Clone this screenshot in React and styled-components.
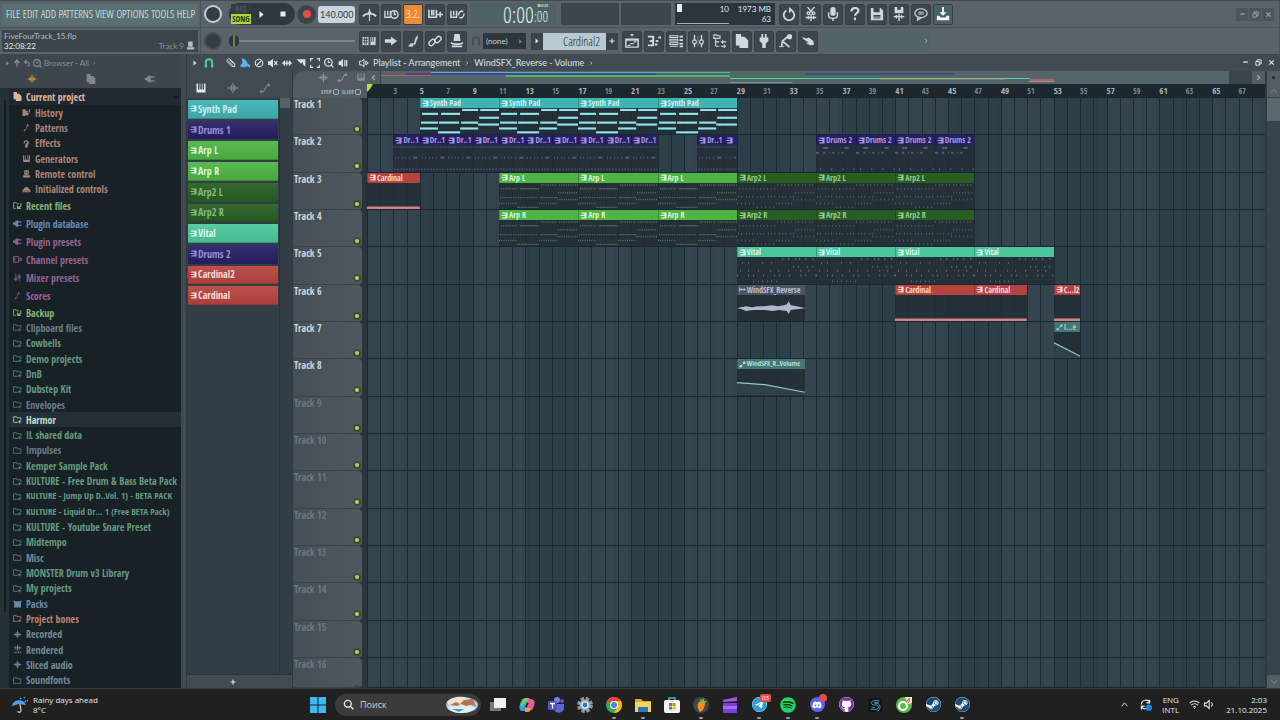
import React, { Component } from 'react';
import styled, { createGlobalStyle, css } from 'styled-components';
import { FaDiscord, FaGithub, FaSpotify, FaSteam, FaTelegram } from 'react-icons/fa6';

const BARS = 68;
const BEATS = 5;

const Fonts = {
    Light: '"Open Sans Condensed Light", "Open Sans Condensed", Lato, sans-serif',
    Narrow: '"Open Sans Condensed", Lato, sans-serif',
    Text: 'Lato, "Open Sans", sans-serif',
    System: '"Open Sans", "Noto Sans", sans-serif'
}

const Colors = {
    Toolbar: '#5a636a',
    Button: '#3d464c',
    Teal: '#3fb2b4',
    Purple: '#291f66',
    Green: '#4eb444',
    DarkGreen: '#285e22',
    Mint: '#4cc79c',
    Red: '#b64340',
    Slate: '#4b5463',
    Pine: '#447673'
}

/* ---------- icons ---------- */

const glyphs = {
    wave: <path d="M1 8h14M4 6v4M6 4v8M8 1v14M10 4v8M12 6v4" stroke="currentColor" strokeWidth="1.4" fill="none"/>,
    files: <path d="M1 0h6v3h4l4 4v9H5v-3H1z" fill="currentColor"/>,
    plug: <path d="M0 6h3c1-2 3-4 6-4v2h6v2H9v4h6v2H9v2c-3 0-5-2-6-4H0z" fill="currentColor"/>,
    note: <path d="M9 1c1 3 4 2 4 5-1-1-2-1-3-1l-3 7c-1 3-5 3-4 1 1-2 3-2 4-2z" fill="currentColor"/>,
    history: <path d="M1 2h5v3h4v4h3l-4 5-4-5h2V7l-1 7H1zM12 2h2v6h-2z" fill="currentColor"/>,
    effects: <path d="M5 15h5v-4l2-2V5L9 2H6L3 5v3h2V6l2-2 2 1v2L6 9v2z" fill="currentColor"/>,
    keys: <path d="M2 2h2v8h2V2h4v8h2V2h2v12H2zM7 2h2v8H7z" fill="currentColor" fillRule="evenodd"/>,
    remote: <path d="M4 2h8v8H4zM2 11h12v4H2zM6 4v4h1V4zM9 4v4h1V4z" fill="currentColor" fillRule="evenodd"/>,
    init: <path d="M4 6c1-3 7-3 8 0l3 3v4H1V9zM3 10v1h10v-1z" fill="currentColor" fillRule="evenodd"/>,
    folder: <path d="M1 3h6l1 2h6v8H1z" fill="none" stroke="currentColor" strokeWidth="1.3"/>,
    folderPlus: <path d="M9 13H1V3h5l1 2h7v4M12 9v6M9 12h6" fill="none" stroke="currentColor" strokeWidth="1.3"/>,
    recent: <g fill="none" stroke="currentColor" strokeWidth="1.5"><path d="M5 13H1V3h5l1 2h4"/><path d="M14 4v5l-6 4M8 8v5h6" strokeWidth="2"/></g>,
    channel: <path d="M1 3h9v10H1zM12 6h3v4h-3zM3 5v6" fill="none" stroke="currentColor" strokeWidth="1.5"/>,
    mixer: <path d="M5 1v14M11 1v14M3 9h4v3H3zM9 5h4v3H9z" fill="none" stroke="currentColor" strokeWidth="1.3"/>,
    box: <path d="M0 2l4 2h8l4-2-2 5v8H2V7z" fill="currentColor"/>,
    rendered: <path d="M1 5h14M5 2v6M8 0v10M11 2v6M2 13h6M10 11v4M13 11v4" fill="none" stroke="currentColor" strokeWidth="1.5"/>,
    pattern: <path d="M3 1h12v14H3v-3h7v-3H1V7h9V4H3z" fill="currentColor"/>,
    audio: <path d="M1 3v10M2 8h13M5 5v6M11 5l3 3-3 3" fill="none" stroke="currentColor" strokeWidth="2"/>,
    curve: <g><path d="M3 13h3l5-9h3" fill="none" stroke="currentColor" strokeWidth="1.5"/><circle cx="3" cy="12.500" r="2" fill="currentColor"/><circle cx="13" cy="4" r="2" fill="currentColor"/></g>,
    auto: <g><path d="M4 12L12 4" stroke="currentColor" strokeWidth="2"/><circle cx="4" cy="12" r="3" fill="currentColor"/><circle cx="12" cy="4" r="3" fill="currentColor"/></g>,
    right: <path d="M5 3l6 5-6 5z" fill="currentColor"/>,
    down: <path d="M3 5h10l-5 6z" fill="currentColor"/>,
    chevron: <path d="M6 4l4 4-4 4" fill="none" stroke="currentColor" strokeWidth="2"/>,
    chevronLeft: <path d="M10 4L6 8l4 4" fill="none" stroke="currentColor" strokeWidth="2"/>,
    chevronUp: <path d="M3 11l5-6 5 6" fill="none" stroke="currentColor" strokeWidth="1.6"/>,
    chevronDown: <path d="M3 5l5 6 5-6" fill="none" stroke="currentColor" strokeWidth="1.6"/>,
    up: <path d="M8 15V4M3 8l5-6 5 6" fill="none" stroke="currentColor" strokeWidth="2.500"/>,
    undo: <path d="M7 2L3 6l4 4M3 6h6c5 0 5 8 0 8" fill="none" stroke="currentColor" strokeWidth="2.200"/>,
    search: <g fill="none" stroke="currentColor" strokeWidth="2"><circle cx="7" cy="7" r="5"/><path d="M11 11l4 4"/></g>,
    zoom: <g fill="none" stroke="currentColor" strokeWidth="2"><circle cx="7" cy="7" r="6"/><path d="M11 11l4 4M7 4v3h3"/></g>,
    stop: <path d="M3 3h10v10H3z" fill="currentColor"/>,
    magnet: <path d="M3 15V7a5 5 0 0110 0v8M1 13h4M11 13h4" fill="none" stroke="currentColor" strokeWidth="3"/>,
    pencil: <path d="M2 3l3-2 9 8v5l-5-1-8-8zM4 5l7 7M6 3l6 6" fill="none" stroke="currentColor" strokeWidth="1.600"/>,
    brush: <path d="M3 0l6 3 3 5 4 4v3l-5-2-5 2-6-2 4-6z" fill="currentColor"/>,
    ban: <g fill="none" stroke="currentColor" strokeWidth="1.800"><circle cx="8" cy="8" r="6"/><path d="M4 12L12 4"/></g>,
    mute: <g><path d="M0 5h3l5-4v14l-5-4H0z" fill="currentColor"/><path d="M10 5l5 6M15 5l-5 6" stroke="currentColor" strokeWidth="2"/></g>,
    slip: <path d="M0 8l5-5v4h6V3l5 5-5 5V9H5v4zM7 4h2v8H7z" fill="currentColor"/>,
    slice: <path d="M1 2h14v12l-4-4V6L8 9z" fill="currentColor"/>,
    select: <path d="M1 5V1h4M11 1h4v4M15 11v4h-4M5 15H1v-4" fill="none" stroke="currentColor" strokeWidth="1.800"/>,
    playback: <path d="M1 5h3l4-4v14l-4-4H1zM10 3h2v10h-2zM13 3h2v10h-2z" fill="currentColor"/>,
    speaker: <path d="M1 5h3l4-3v12l-4-3H1zM11 5l4 3-4 3z" fill="none" stroke="currentColor" strokeWidth="1.600"/>,
    metronome: <g><path d="M1 10c3-4 11-4 14 0" fill="none" stroke="currentColor" strokeWidth="2"/><path d="M8 2v13" stroke="currentColor" strokeWidth="1.200"/><path d="M5 8l3-5 3 5z" fill="currentColor"/></g>,
    waitInput: <g fill="none" stroke="currentColor" strokeWidth="1.500"><path d="M1 4v7h6M4 4v5M7 4v7"/><circle cx="11" cy="8" r="4"/><path d="M11 5v3h2"/></g>,
    overdub: <path d="M1 3v8h8V3M4 3v6M6 3v6M10 8h6M13 5v6" fill="none" stroke="currentColor" strokeWidth="1.700"/>,
    loopRec: <g fill="none" stroke="currentColor" strokeWidth="1.600"><path d="M1 4v7h6V4M4 4v5"/><path d="M9 9c0-5 4-5 5-4M15 7c0 5-4 5-5 4"/></g>,
    typing: <path d="M0 3h8v10H0zM9 3h7v10H9zM1 6h6M1 9h6M3 4v8M5 4v8M11 3v6M13 3v6" fill="currentColor" stroke="#3d464c" strokeWidth="1"/>,
    arrow: <path d="M1 6h7V3l7 5-7 5v-3H1z" fill="currentColor"/>,
    slide: <path d="M3 14l2-3h3v3zM8 11c3 0 1-5 5-9l0 3c-2 2-1 5-3 7z" fill="currentColor" stroke="currentColor" strokeWidth=".6"/>,
    chain: <g fill="none" stroke="currentColor" strokeWidth="1.600"><rect x="1" y="7" width="8" height="5" rx="2.500" transform="rotate(-45 5 10)"/><rect x="7" y="4" width="8" height="5" rx="2.500" transform="rotate(-45 11 6)"/></g>,
    stamp: <path d="M5 0h6l1 8H4zM1 9c3 2 11 2 14 0v2c-3 2-11 2-14 0zM2 13h12v2H2z" fill="currentColor"/>,
    refresh: <g><path d="M5 4a6 6 0 106 0" fill="none" stroke="currentColor" strokeWidth="2"/><path d="M8 0v7l4-4z" fill="currentColor"/></g>,
    cut: <g fill="none" stroke="currentColor" strokeWidth="1.500"><path d="M4 0l5 6M12 0L7 6M2 12h12M5 10v4M11 10v4M8 8v8"/><circle cx="5" cy="7" r="1.500"/><circle cx="11" cy="7" r="1.500"/></g>,
    mic: <g><rect x="5" y="0" width="6" height="10" rx="3" fill="currentColor"/><path d="M3 6v4c0 4 10 4 10 0V6M8 13v3" fill="none" stroke="currentColor" strokeWidth="1.600"/></g>,
    help: <path d="M4 5c0-5 8-5 8-1 0 3-4 3-4 6M8 12v3" fill="none" stroke="currentColor" strokeWidth="2.400"/>,
    save: <path d="M1 1h11l3 3v11H1zM4 1v5h7V1zM4 9v2h8V9zM4 12v1h8v-1z" fill="currentColor" fillRule="evenodd"/>,
    saveNew: <g><path d="M3 0h10v7H3zM6 0v3h4V0z" fill="currentColor" fillRule="evenodd"/><path d="M2 11h12M5 9v4M8 8v8M11 9v4" stroke="currentColor" strokeWidth="1.600"/></g>,
    chat: <g fill="none" stroke="currentColor" strokeWidth="1.400"><ellipse cx="8" cy="7" rx="7" ry="5"/><path d="M5 11l-1 4 5-3M5 6h6M5 8h6"/></g>,
    download: <path d="M7 0h2v6h3L8 10 4 6h3zM1 10h3l1 2h6l1-2h3v5H1z" fill="currentColor"/>,
    playlist: <g><path d="M1 6h14v9H1zM1 7h14" fill="none" stroke="currentColor" strokeWidth="1.700"/><path d="M3 13h3M6 11h4M10 9h3" stroke="currentColor" strokeWidth="1.500"/><path d="M6 0h4L8 3z" fill="currentColor"/></g>,
    piano: <path d="M1 3h6v10H1M3 8h4M9 12h3M10 8h3M13 4h3" fill="none" stroke="currentColor" strokeWidth="2.200"/>,
    rack: <g fill="none" stroke="currentColor"><path d="M1 2h9v2H1zM1 6h9v2H1zM1 10h9v2H1zM1 14h9" strokeWidth="1.200"/><path d="M12 3h4M12 7h4M12 11h4M12 14h4" strokeWidth="2"/></g>,
    faders: <g fill="none" stroke="currentColor"><path d="M4 1v5M4 11v4M12 1v5M12 11v4" strokeWidth="1.500"/><path d="M2 8l2-2 2 2v2l-2 2-2-2zM10 8l2-2 2 2v2l-2 2-2-2z" strokeWidth="1.300"/><path d="M8 2v12" strokeWidth="1" strokeOpacity=".5"/></g>,
    tree: <path d="M1 5V1h3l1 1h3v3zM3 6v8M3 9h4M3 14h4M9 9h6M9 14h6M11 7v4M13 12v4" fill="none" stroke="currentColor" strokeWidth="1.300"/>,
    jack: <path d="M5 0h2v4h2V0h2v4h2v4l-3 3v5H6v-5L3 8V4h2z" fill="currentColor"/>,
    perf: <g><path d="M3 14l1-6 6-5M5 9l7 6" fill="none" stroke="currentColor" strokeWidth="2"/><circle cx="12" cy="3" r="3" fill="currentColor"/><path d="M0 14h6v1H0z" fill="currentColor"/></g>,
    touch: <path d="M1 3l5 2 3-1 5 4 1 4-4 1-6-3 4 0-6-4z" fill="currentColor"/>,
    plus: <path d="M8 3v10M3 8h10" stroke="currentColor" strokeWidth="2.400"/>,
    min: <path d="M3 7h10" stroke="currentColor" strokeWidth="3"/>,
    restore: <path d="M2 6h8v8H2zM5 5V2h9v9h-3" fill="none" stroke="currentColor" strokeWidth="2.200"/>,
    close: <path d="M3 3l10 10M13 3L3 13" stroke="currentColor" strokeWidth="2.600"/>,
    wifi: <path d="M1 6c4-4 10-4 14 0M3 9c3-3 7-3 10 0M6 12c1-1 3-1 4 0M8 13v1" fill="none" stroke="currentColor" strokeWidth="1.500"/>,
    volume: <path d="M2 6h3l4-4v12L5 10H2zM12 5c2 2 2 4 0 6" fill="none" stroke="currentColor" strokeWidth="1.500"/>,
    sync: <g><path d="M3 8c0-6 8-7 10-3M13 2v4H9M3 14v-4h4M3 10c1 3 4 4 6 3" fill="none" stroke="currentColor" strokeWidth="1.500"/><circle cx="12" cy="12" r="4" fill="#1583e0"/></g>,
    disk: <path d="M2 1h8v9H2zM0 11h13v4H0z" fill="currentColor"/>
}

const Svg = styled.svg`
  display: block;
  flex: none;
  width: ${props => props.$size}px;
  height: ${props => props.$size}px;
`

const Icon = ({ name, size = 12 }) =>
    <Svg viewBox="0 0 16 16" $size={size} aria-hidden="true">{glyphs[name]}</Svg>

/* ---------- data ---------- */

const menus = ['FILE', 'EDIT', 'ADD', 'PATTERNS', 'VIEW', 'OPTIONS', 'TOOLS', 'HELP']

const projectItems = [
    ['history', 'History'],
    ['note', 'Patterns'],
    ['effects', 'Effects'],
    ['keys', 'Generators'],
    ['remote', 'Remote control'],
    ['init', 'Initialized controls']
]

const sectionItems = [
    ['recent', 'Recent files', '#86b476'],
    ['plug', 'Plugin database', '#688ab1'],
    ['plug', 'Plugin presets', '#976191'],
    ['channel', 'Channel presets', '#976191'],
    ['mixer', 'Mixer presets', '#976191'],
    ['note', 'Scores', '#976191']
]

const folderItems = [
    ['recent', 'Backup', '#86b476'],
    ['folderPlus', 'Clipboard files', '#677d8d'],
    ['folderPlus', 'Cowbells', '#669b80'],
    ['folderPlus', 'Demo projects', '#669b80'],
    ['folderPlus', 'DnB', '#669b80'],
    ['folderPlus', 'Dubstep Kit', '#669b80'],
    ['folderPlus', 'Envelopes', '#677d8d'],
    ['folderPlus', 'Harmor', '#bfe0ce'],
    ['folderPlus', 'IL shared data', '#669b80'],
    ['folder', 'Impulses', '#677d8d'],
    ['folderPlus', 'Kemper Sample Pack', '#669b80'],
    ['folderPlus', 'KULTURE - Free Drum & Bass Beta Pack', '#669b80'],
    ['folderPlus', 'KULTURE - Jump Up D..Vol. 1) - BETA PACK', '#669b80'],
    ['folderPlus', 'KULTURE - Liquid Dr... 1 (Free BETA Pack)', '#669b80'],
    ['folderPlus', 'KULTURE - Youtube Snare Preset', '#669b80'],
    ['folderPlus', 'Midtempo', '#669b80'],
    ['folder', 'Misc', '#748a97'],
    ['folderPlus', 'MONSTER Drum v3 Library', '#669b80'],
    ['folderPlus', 'My projects', '#669b80'],
    ['box', 'Packs', '#688ab1'],
    ['folderPlus', 'Project bones', '#ba8570'],
    ['wave', 'Recorded', '#748a97'],
    ['rendered', 'Rendered', '#748a97'],
    ['wave', 'Sliced audio', '#748a97'],
    ['folder', 'Soundfonts', '#748a97']
]

const patterns = [
    ['Synth Pad', Colors.Teal, '#cdf1ef'],
    ['Drums 1', Colors.Purple, '#9790d6'],
    ['Arp L', Colors.Green, '#dcf5d8'],
    ['Arp R', Colors.Green, '#dcf5d8'],
    ['Arp2 L', Colors.DarkGreen, '#86ba7f'],
    ['Arp2 R', Colors.DarkGreen, '#86ba7f'],
    ['Vital', Colors.Mint, '#daf6ec'],
    ['Drums 2', Colors.Purple, '#9790d6'],
    ['Cardinal2', Colors.Red, '#f6d9d7'],
    ['Cardinal', Colors.Red, '#f6d9d7']
]

const clip = (kind, name, start, end) => ({ kind, name, start, end })
const repeat = (kind, name, from, to, step) => {
    const clips = []
    for (let bar = from; bar < to; bar += step) clips.push(clip(kind, name, bar, bar + step))
    return clips
}

const tracks = [
    repeat('synth', 'Synth Pad', 5, 29, 6),
    [
        ...repeat('drums', 'Dr..1', 3, 23, 2),
        clip('drums', 'Dr..1', 26, 28),
        clip('drums', '', 28, 29),
        ...repeat('drums2', 'Drums 2', 35, 47, 3)
    ],
    [clip('cardinal', 'Cardinal', 1, 5), ...repeat('arp', 'Arp L', 11, 29, 6), ...repeat('arp2', 'Arp2 L', 29, 47, 6)],
    [...repeat('arp', 'Arp R', 11, 29, 6), ...repeat('arp2', 'Arp2 R', 29, 47, 6)],
    repeat('vital', 'Vital', 29, 53, 6),
    [
        clip('audio', 'WindSFX_Reverse', 29, 34.2),
        clip('cardinal', 'Cardinal', 41, 47),
        clip('cardinal', 'Cardinal', 47, 51),
        clip('cardinal', 'C...l2', 53, 55)
    ],
    [clip('autoShort', 'I...e', 53, 55)],
    [clip('auto', 'WindSFX_R..Volume', 29, 34.2)],
    [], [], [], [], [], [], [], []
]

const clipColors = {
    synth: [Colors.Teal, '#cdf1ef'],
    drums: [Colors.Purple, '#a39bd8'],
    drums2: [Colors.Purple, '#a39bd8'],
    cardinal: [Colors.Red, '#f6d9d7'],
    arp: [Colors.Green, '#dcf5d8'],
    arp2: [Colors.DarkGreen, '#98cb90'],
    vital: [Colors.Mint, '#daf6ec'],
    audio: [Colors.Slate, '#bcc1cf'],
    auto: [Colors.Pine, '#b9dad4'],
    autoShort: [Colors.Pine, '#a0c8c0']
}

/* ---------- clip previews ---------- */

// x1, x2, y of the six bar chord phrase
const phrase = [
    [42, 58, 2], [60, 79, 2], [2, 18, 6], [21, 40, 6], [59, 79, 10],
    [1, 18, 15], [19, 39, 15], [41, 58, 15], [58, 79, 17], [0, 18, 21], [40, 58, 21], [18, 40, 25]
]

const Preview = styled.svg`
  display: block;
  flex: 1;
  width: 100%;
  min-height: 0;
`

const rows = (list, color, opacity = 1) => list.map(([x1, x2, y, dash], i) =>
    <path key={i} d={`M${x1} ${y}H${x2}`} stroke={color} strokeOpacity={opacity} strokeWidth="2" strokeDasharray={dash}/>
)

const previews = {
    synth: [79, phrase.map(([x1, x2, y], i) => <path key={i} d={`M${x1} ${y}H${x2}`} stroke="#8ee6ea" strokeWidth="2.200"/>)],
    arp: [79, phrase.map(([x1, x2, y], i) =>
        <path key={i} d={`M${x1} ${y}H${x2}`} stroke="#6f9c72" strokeOpacity={i % 4 === 3 ? 0.45 : 0.65}
              strokeWidth="1.500" strokeDasharray={i % 4 === 3 ? '3 0.5' : '1 1.2'}/>)],
    arp2: [79, rows([
        [40, 79, 2, '1 3 1 2'], [2, 38, 6, '1 2.5'], [58, 79, 10, '1 2'], [1, 58, 14, '1 2 1 4 1 2'],
        [56, 79, 17, '1 3'], [0, 18, 21, '1 3'], [39, 56, 21, '1 2'], [20, 38, 25, '1 3']
    ], '#6f9c72', 0.45)],
    vital: [79, rows([
        [45, 79, 2, '1 5 1 6 1 3'], [5, 40, 6, '1 5 1 13 1 8'], [56, 79, 10, '1 4 1 8'], [3, 76, 14, '1 7 1 9 1 11'],
        [0, 79, 19, '1 10 1 4 1 9'], [16, 40, 25, '1 4 1 3']
    ], '#5d9c8e', 0.65)],
    drums: [26, <g key="d">{rows([[0, 26, 2, '1 1.2']], '#6c6a96', 0.4)}{rows([[2, 18, 13, '1 2 1 3'], [20, 24, 13]], '#7370b0', 0.6)}{rows([[1, 26, 25, '1.5 1.5']], '#7370b0', 0.5)}</g>],
    drums2: [39, <g key="d">{rows([[7, 12, 3], [28, 32, 3]], '#6f6bb0', 0.7)}{rows([[0, 3, 8], [7, 30, 8, '2 4 1 2']], '#6f6bb0', 0.7)}{rows([[4, 38, 25, '1 10']], '#7370b0', 0.9)}</g>],
    cardinal: [79, <path key="c" d="M0 25.500H79" stroke="#d78080" strokeWidth="3"/>],
    audio: [69, <path key="a" fill="#b3b6cc" d="M0 13.500l4-1 5-1 6 1 6-1 6 0 8-1 6 1 6-1 3-1 2-3 2 4 6 1 9 2-9 1-6 1-2 4-2-3-8-1-6 1-8-1-7 0-5 0-7 1-4-2z"/>],
    auto: [69, <g key="a"><path d="M0 14L28 16 69 24V27H0z" fill="#5f9b91" fillOpacity=".18"/><path d="M0 14L28 16 69 24" fill="none" stroke="#93c9c4" strokeWidth="1.200"/></g>],
    autoShort: [26, <g key="a"><path d="M0 11L26 25V27H0z" fill="#5f9b91" fillOpacity=".18"/><path d="M0 11L26 25" fill="none" stroke="#93c9c4" strokeWidth="1.200"/></g>]
}

/* ---------- shared ---------- */

const GlobalStyle = createGlobalStyle`
  * { box-sizing: border-box; }
  body {
    margin: 0;
    background: #1d1f20;
    font-family: ${Fonts.Text};
    font-size: 10px;
    line-height: 12px;
  }
  button, input, select {
    margin: 0;
    padding: 0;
    border: 0;
    background: none;
    color: inherit;
    font: inherit;
  }
  ul { margin: 0; padding: 0; list-style: none; }
`

const Screen = styled.div`
  display: flex;
  flex-direction: column;
  height: 100vh;
  min-height: 480px;
  overflow: hidden;
`

const Center = css`
  display: flex;
  align-items: center;
  justify-content: center;
`

/* ---------- toolbar ---------- */

const Toolbar = styled.header`
  display: flex;
  flex: none;
  height: 54px;
  background: ${Colors.Toolbar};
  border-top: 1px solid #434c53;
`

const ToolbarColumn = styled.div`
  display: flex;
  flex-direction: column;
  width: ${props => props.$width ? `${props.$width}px` : 'auto'};
  flex: ${props => props.$width ? 'none' : 1};
  border-right: 1px solid #495259;
`

const ToolbarRow = styled.div`
  display: flex;
  align-items: center;
  gap: 2px;
  height: 27px;
  padding: 0 2px;
  & + & { border-top: 1px solid #495259; }
`

const Menu = styled.nav`
  display: flex;
  align-items: center;
  justify-content: space-between;
  width: 100%;
  height: 21px;
  padding: 0 3px 0 4px;
  background: #587070;
  color: #f0f6f6;
  font-family: ${Fonts.Light};
  font-size: 11px;
`

const Hint = styled.div`
  display: grid;
  grid-template-columns: 1fr auto auto;
  column-gap: 3px;
  width: 100%;
  height: 22px;
  padding: 1px 2px;
  background: #3c454b;
  color: #b3bdc3;
  font-size: 8px;
  line-height: 10px;
`

const HintFile = styled.div`
  grid-column: 1 / -1;
`

const HintTime = styled.div`
  color: #e2e8ea;
`

const HintTrack = styled.div`
  color: #848f96;
`

const Knob = styled.button`
  width: 18px;
  height: 18px;
  margin: 0 5px 0 1px;
  border: 2px solid ${props => props.$ring};
  border-radius: 50%;
  background: #343d43;
`

const Transport = styled.div`
  display: flex;
  align-items: center;
  width: 66px;
  height: 22px;
  border-radius: 11px;
  background: #31393f;
  color: #e8edee;
`

const PatSong = styled.button`
  width: 20px;
  height: 20px;
  margin-left: 2px;
  background: linear-gradient(#343c40 50%, #a5d83c 50%);
  color: #263010;
  font-family: ${Fonts.Narrow};
  font-size: 8px;
  line-height: 10px;
`

const PatLabel = styled.span`
  display: block;
  color: #4b555b;
`

const TransportButton = styled.button`
  ${Center};
  width: 21px;
  height: 22px;
`

const Record = styled.button`
  ${Center};
  width: 19px;
  height: 19px;
  border-radius: 50%;
  background: #3b4449;
  &:after {
    content: '';
    width: 8px;
    height: 8px;
    border-radius: 50%;
    background: #ea4b4b;
  }
`

const Tempo = styled.input`
  width: 37px;
  height: 17px;
  padding-left: 2px;
  border-radius: 3px;
  background: #c9d5dd;
  color: #323c42;
  font-size: 9px;
`

const Slider = styled.input`
  width: 126px;
  height: 14px;
  appearance: none;
  background: linear-gradient(transparent 6px, #78828a 6px, #78828a 8px, transparent 8px);
  &::-webkit-slider-thumb {
    appearance: none;
    width: 10px;
    height: 12px;
    border-radius: 5px;
    background: linear-gradient(90deg, #2f373c 4px, #75813f 4px, #75813f 6px, #2f373c 6px);
  }
`

const Tool = styled.button`
  ${Center};
  flex: none;
  width: 20px;
  height: 21px;
  border: 1px solid #363f45;
  border-radius: 2px;
  background: ${props => props.$active || Colors.Button};
  color: ${props => props.$active ? '#fff' : '#cfd8dc'};
  font-family: ${Fonts.Light};
  font-size: 11px;
`

const Clock = styled.div`
  display: flex;
  align-items: flex-end;
  justify-content: flex-end;
  width: 86px;
  height: 22px;
  margin-left: 1px;
  padding-right: 8px;
  background: #4f6263;
  color: #d9eae9;
  font-family: ${Fonts.Light};
  font-size: 22px;
  line-height: 22px;
`

const ClockSmall = styled.span`
  display: flex;
  flex-direction: column;
  align-items: flex-end;
  font-size: 14px;
  line-height: 17px;
`

const ClockUnit = styled.small`
  font-family: ${Fonts.Narrow};
  font-size: 4px;
  line-height: 5px;
`

const Scope = styled.div`
  width: ${props => props.$width}px;
  height: 22px;
  margin-left: ${props => props.$wide ? 3 : 0}px;
  background: #3c454c;
`

const Stats = styled.div`
  display: grid;
  grid-template-columns: 1fr 42px;
  width: 100px;
  height: 22px;
  margin: 0 2px;
  padding: 1px 4px 1px 2px;
  background: #2c353b;
  color: #dfe7ea;
  font-size: 8px;
  line-height: 10px;
  text-align: right;
`

const StatsGraph = styled.div`
  display: flex;
  grid-row: span 2;
  justify-content: space-between;
  border-bottom: 1px solid #a5b0b6;
  &:before {
    content: '';
    width: 5px;
    height: 8px;
    background: #e8eef0;
  }
`

const SnapGroup = styled.label`
  display: flex;
  align-items: center;
  gap: 2px;
  margin: 0 3px 0 2px;
  color: #474f55;
`

const SnapBox = styled.span`
  display: flex;
  align-items: center;
  justify-content: space-between;
  width: 43px;
  height: 16px;
  padding: 0 2px 0 3px;
  background: #2e363c;
  color: #7c868c;
`

const Snap = styled.select`
  appearance: none;
  color: #c5ced3;
  font-size: 8px;
`

const PatternPicker = styled.div`
  display: flex;
  align-items: center;
  height: 17px;
  margin-right: 2px;
  background: #3b444a;
  color: #d9e1e4;
`

const PatternName = styled.input`
  width: 63px;
  height: 17px;
  padding-right: 6px;
  background: #b9c9d2;
  color: #1d262b;
  font-family: ${Fonts.Light};
  font-size: 12px;
  text-align: right;
`

const PickerButton = styled.button`
  ${Center};
  width: 12px;
  height: 17px;
`

const OnlinePanel = styled.div`
  display: flex;
  align-items: center;
  justify-content: flex-end;
  width: 110px;
  height: 21px;
  background: #526466;
  color: #93a2a5;
`

const WindowButtons = styled.div`
  display: flex;
  gap: ${props => props.$gap}px;
  margin-left: auto;
  padding-right: 3px;
  color: ${props => props.$color};
`

const WindowButton = styled.button`
  ${Center};
  width: 12px;
  height: 13px;
  background: ${props => props.$bg || 'none'};
`

const topTools = [['metronome'], ['waitInput'], ['count', '#f08a35'], ['overdub'], ['loopRec']]
const lowTools = ['typing', 'arrow', 'slide', 'chain', 'stamp']
const fileTools = ['refresh', 'cut', 'mic', 'help', 'save', 'saveNew', 'chat']
const viewTools = ['playlist', 'piano', 'rack', 'faders', 'tree', 'files', 'jack', 'perf', 'touch']

const MainToolbar = () => (
    <Toolbar>
        <ToolbarColumn $width={201}>
            <ToolbarRow>
                <Menu>{menus.map(menu => <button key={menu}>{menu}</button>)}</Menu>
            </ToolbarRow>
            <ToolbarRow>
                <Hint>
                    <HintFile>FiveFourTrack_15.flp</HintFile>
                    <HintTime>32:08:22</HintTime>
                    <HintTrack>Track 9</HintTrack>
                    <Icon name="disk" size={9}/>
                </Hint>
            </ToolbarRow>
        </ToolbarColumn>
        <ToolbarColumn>
            <ToolbarRow>
                <Knob $ring="#c6ced2" aria-label="Main volume"/>
                <Transport>
                    <PatSong><PatLabel>PAT</PatLabel>SONG</PatSong>
                    <TransportButton aria-label="Play"><Icon name="right" size={11}/></TransportButton>
                    <TransportButton aria-label="Stop"><Icon name="stop" size={8}/></TransportButton>
                </Transport>
                <Record aria-label="Record"/>
                <Tempo aria-label="Tempo" defaultValue="140.000"/>
                <span/>
                {topTools.map(([name, active]) =>
                    <Tool key={name} $active={active} aria-label={name}>
                        {name === 'count' ? '3.2.' : <Icon name={name} size={15}/>}
                    </Tool>
                )}
                <Clock>0:00<ClockSmall><ClockUnit>M:S:CS</ClockUnit>:00</ClockSmall></Clock>
                <Scope $width={58} $wide/>
                <Scope $width={50}/>
                <Stats>
                    <StatsGraph>10</StatsGraph>
                    <span>1973 MB</span>
                    <span>63</span>
                </Stats>
                {fileTools.map(name => <Tool key={name} aria-label={name}><Icon name={name} size={14}/></Tool>)}
                <Tool $active="#48625f" aria-label="Download"><Icon name="download" size={14}/></Tool>
                <WindowButtons $gap={1} $color="#99a3a9">
                    {['min', 'restore', 'close'].map(name =>
                        <WindowButton key={name} $bg="#4c555c" aria-label={name}><Icon name={name} size={7}/></WindowButton>
                    )}
                </WindowButtons>
            </ToolbarRow>
            <ToolbarRow>
                <Knob $ring="#454e54" aria-label="Main pitch"/>
                <Slider type="range" defaultValue="0" aria-label="Song position"/>
                <span/>
                {lowTools.map(name => <Tool key={name} aria-label={name}><Icon name={name} size={14}/></Tool>)}
                <SnapGroup>
                    <Icon name="magnet" size={10}/>
                    <SnapBox>
                        <Snap aria-label="Snap"><option>(none)</option></Snap>
                        <Icon name="right" size={7}/>
                    </SnapBox>
                </SnapGroup>
                <PatternPicker>
                    <PickerButton aria-label="Patterns"><Icon name="right" size={8}/></PickerButton>
                    <PatternName aria-label="Pattern name" defaultValue="Cardinal2"/>
                    <PickerButton aria-label="Add pattern"><Icon name="plus" size={8}/></PickerButton>
                </PatternPicker>
                {viewTools.map(name => <Tool key={name} aria-label={name}><Icon name={name} size={14}/></Tool>)}
                <OnlinePanel><Icon name="chevron" size={8}/></OnlinePanel>
            </ToolbarRow>
        </ToolbarColumn>
    </Toolbar>
)

/* ---------- browser ---------- */

const Workspace = styled.main`
  display: flex;
  flex: 1;
  min-height: 0;
  background: #414a50;
`

const BrowserPanel = styled.aside`
  display: flex;
  flex-direction: column;
  flex: none;
  width: 181px;
  background: #3d464c;
`

const BrowserPath = styled.div`
  display: flex;
  align-items: center;
  gap: 2px;
  height: 18px;
  padding-left: 4px;
  color: #848d93;
  font-size: 8px;
`

const BrowserTabs = styled.div`
  display: flex;
  justify-content: space-around;
  align-items: center;
  height: 16px;
  padding: 0 2px 2px;
  color: #7f898f;
`

const BrowserTab = styled.button`
  ${Center};
  width: 16px;
  color: ${props => props.$current ? '#c9973c' : 'inherit'};
`

const BrowserBody = styled.div`
  display: flex;
  flex: 1;
  min-height: 0;
  background: #263037;
`

const BrowserRail = styled.div`
  width: 9px;
  padding: 12px 0 76px 4px;
  &:before {
    content: '';
    display: block;
    width: 2px;
    height: 100%;
    background: #141c20;
  }
`

const BrowserList = styled.ul`
  display: flex;
  flex-direction: column;
  flex: 1;
  min-width: 0;
  background: #182126;
`

const BrowserRow = styled.li`
  display: flex;
  flex: ${props => props.$weight} 1 0;
  align-items: center;
  min-height: 0;
  padding-left: ${props => props.$nested ? 13 : 4}px;
  background: ${props => props.$selected ? '#262f35' : 'none'};
`

const BrowserButton = styled.button`
  display: flex;
  align-items: center;
  gap: 4px;
  color: ${props => props.$color};
  font-family: ${Fonts.Narrow};
  font-size: ${props => props.$compact ? 9 : 10}px;
  line-height: 14px;
  white-space: nowrap;
`

const ProjectRow = styled(BrowserRow)`
  flex: none;
  justify-content: space-between;
  height: 17px;
  padding-right: 2px;
  background: #20292f;
  color: #0f171b;
`

const BrowserItem = ({ item: [icon, label, color], weight, nested }) => (
    <BrowserRow $weight={weight} $nested={nested} $selected={label === 'Harmor'}>
        <BrowserButton $color={color || '#ad8475'} $compact={label.length > 38}>
            <Icon name={icon} size={9}/>{label}
        </BrowserButton>
    </BrowserRow>
)

const Browser = () => (
    <BrowserPanel>
        <BrowserPath>
            <Icon name="right" size={7}/><Icon name="up" size={8}/><Icon name="undo" size={8}/><Icon name="zoom" size={9}/>
            Browser - All <Icon name="chevron" size={6}/>
        </BrowserPath>
        <BrowserTabs>
            <BrowserTab $current aria-label="All"><Icon name="wave" size={10}/></BrowserTab>
            <BrowserTab aria-label="Files"><Icon name="files" size={10}/></BrowserTab>
            <BrowserTab aria-label="Plugins"><Icon name="plug" size={10}/></BrowserTab>
        </BrowserTabs>
        <BrowserBody>
            <BrowserRail/>
            <BrowserList>
                <ProjectRow>
                    <BrowserButton $color="#e0b6a3"><Icon name="files" size={9}/>Current project</BrowserButton>
                    <Icon name="down" size={6}/>
                </ProjectRow>
                {projectItems.map(item => <BrowserItem key={item[1]} item={item} weight={17} nested/>)}
                {sectionItems.map(item => <BrowserItem key={item[1]} item={item} weight={20}/>)}
                {folderItems.map(item => <BrowserItem key={item[1]} item={item} weight={17}/>)}
            </BrowserList>
        </BrowserBody>
    </BrowserPanel>
)

/* ---------- playlist ---------- */

const PlaylistWindow = styled.section`
  display: flex;
  flex-direction: column;
  flex: 1;
  min-width: 0;
  margin-left: 5px;
  border-left: 1px solid #2f383e;
`

const TitleBar = styled.div`
  display: flex;
  align-items: center;
  gap: 4px;
  flex: none;
  height: 17px;
  padding-left: 4px;
  color: #dbe1e4;
`

const EditTools = styled.div`
  display: flex;
  gap: 2px;
  margin-right: 6px;
`

const EditTool = styled.button`
  ${Center};
  width: 12px;
  height: 14px;
  color: ${props => props.$color || 'inherit'};
`

const Title = styled.h1`
  display: flex;
  align-items: center;
  gap: 4px;
  margin: 0;
  font-size: 9px;
  font-weight: 400;
`

const PlaylistBody = styled.div`
  display: flex;
  flex: 1;
  min-height: 0;
`

const PickerPanel = styled.div`
  display: flex;
  flex-direction: column;
  flex: none;
  width: 106px;
  border-right: 1px solid #2f383e;
`

const PickerTabs = styled.div`
  display: flex;
  align-items: center;
  gap: 20px;
  flex: none;
  height: 27px;
  padding: 7px 0 0 8px;
  color: #7c868c;
`

const PickerTab = styled.button`
  color: ${props => props.$current ? '#e6ebed' : 'inherit'};
`

const PickerBody = styled.div`
  display: flex;
  flex: 1;
  border: 1px solid #293238;
  border-width: 0 0 1px;
  background: #333d45;
`

const PickerList = styled.ul`
  display: grid;
  grid-template-rows: repeat(10, 1fr);
  gap: 2px;
  flex: 1;
  height: 207px;
  padding: 2px 1px 0;
`

const PickerItem = styled.li`
  position: relative;
  display: flex;
  min-height: 0;
  background: linear-gradient(#fff1, #0001), ${props => props.$bg};
  border-bottom: 1px solid #0004;
  ${props => props.$selected && css`
    &:before {
      content: '';
      position: absolute;
      top: 5px;
      left: -1px;
      border: 4px solid transparent;
      border-left-color: #e8174a;
    }
  `};
`

const PickerLabel = styled.button`
  display: flex;
  align-items: center;
  gap: 1px;
  width: 100%;
  padding-left: 2px;
  color: ${props => props.$color};
  font-family: ${Fonts.Narrow};
  font-size: 10px;
`

const PickerScroll = styled.div`
  width: 13px;
  padding-right: 2px;
  border-left: 1px solid #2a3339;
  &:before {
    content: '';
    display: block;
    height: 10px;
    background: #566067;
  }
`

const AddPattern = styled.button`
  ${Center};
  flex: none;
  height: 13px;
  padding-right: 13px;
  color: #dbe1e4;
`

const Arrangement = styled.div`
  display: grid;
  grid-template-columns: 74px minmax(0, 1fr) 15px;
  grid-template-rows: 13px 14px minmax(0, 1fr);
  flex: 1;
  min-width: 0;
`

const TrackOptions = styled.div`
  display: flex;
  flex-direction: column;
  justify-content: space-between;
  grid-row: span 2;
  padding-left: 24px;
  border-radius: 12px 0 0;
  background: #515b61;
  color: #879197;
`

const OptionIcons = styled.div`
  display: flex;
  gap: 8px;
  padding: 1px 0 0 1px;
`

const Switches = styled.div`
  display: flex;
  gap: 3px;
  padding: 0 0 1px 4px;
`

const Switch = styled.label`
  display: flex;
  align-items: center;
  gap: 1px;
  color: #a9b2b7;
  font-family: ${Fonts.Narrow};
  font-size: 6px;
  line-height: 10px;
`

const SwitchBox = styled.input`
  width: 6px;
  height: 6px;
  appearance: none;
  border: 1px solid #a9b2b7;
  border-radius: 2px;
`

const Overview = styled.div`
  display: flex;
  background: #3b4449;
  color: #a4adb1;
`

const OverviewButton = styled.button`
  ${Center};
  width: 13px;
  background: #535d62;
`

const OverviewMap = styled.svg`
  flex: 1;
  min-width: 0;
  height: 13px;
  margin-right: 23px;
  border-left: 1px solid #3b4449;
  background: #53646a;
`

const Corner = styled.div`
  ${Center};
  border-left: 2px solid #2f383e;
  background: #535d62;
  &:before {
    content: '';
    width: 3px;
    height: 3px;
    background: #2c353a;
  }
`

const Ruler = styled.div`
  display: grid;
  grid-template-columns: repeat(${BARS / 2}, minmax(0, 1fr));
  align-items: center;
  background: #1c272e;
  overflow: hidden;
`

const RulerMark = styled.span`
  color: ${props => props.$strong ? '#a9b4ba' : '#7b878e'};
  font-family: ${Fonts.Narrow};
  font-size: ${props => props.$strong ? 9 : 8}px;
  white-space: nowrap;
`

const PlayHead = styled.span`
  justify-self: start;
  align-self: start;
  border: 3px solid transparent;
  border-top: 5px solid #b5e045;
  border-left-color: #b5e045;
`

const laneRows = css`
  display: grid;
  grid-template-rows: repeat(15, minmax(0, 5fr)) minmax(0, 4fr);
  min-height: 0;
`

const Headers = styled.div`
  ${laneRows};
  background: #2b343a;
`

const Header = styled.div`
  display: flex;
  align-items: flex-start;
  justify-content: space-between;
  margin-right: 5px;
  padding: 0 1px;
  border-bottom: 1px solid #3a4349;
  border-radius: 0 4px 4px 0;
  background: linear-gradient(90deg, #454f55, #4e585e);
  color: ${props => props.$used ? '#cdd4d8' : '#6c777d'};
  font-family: ${Fonts.Narrow};
  font-size: 10px;
  overflow: hidden;
`

const Led = styled.button`
  flex: none;
  width: 8px;
  height: 8px;
  margin-top: 27px;
  border: 2px solid #3c4a3c;
  border-radius: 50%;
  background: #a4e03f;
`

const Lanes = styled.div`
  ${laneRows};
  overflow: hidden;
`

const Lane = styled.div`
  display: grid;
  grid-template-columns: repeat(${BARS * BEATS}, minmax(0, 1fr));
  grid-template-rows: minmax(0, 1fr);
  min-height: 0;
  border-bottom: 1px solid #182731;
`

const Bar = styled.div`
  grid-row: 1;
  grid-column: ${props => props.$index * BEATS + 1} / span ${BEATS};
  border-left: 1px solid #1b2b35;
  background: repeating-linear-gradient(90deg, transparent 0 18%, #0001 18% 20%), ${props => props.$light ? '#34454f' : '#2d3f49'};
`

const ClipBox = styled.div`
  display: flex;
  flex-direction: column;
  grid-row: 1;
  grid-column: ${props => props.$from} / ${props => props.$to};
  min-width: 0;
  background: #222c34d0;
`

const ClipHeader = styled.div`
  display: flex;
  align-items: center;
  gap: 1px;
  flex: none;
  height: 10px;
  padding-left: 1px;
  border-left: 1px solid #0003;
  background: ${props => props.$bg};
  color: ${props => props.$color};
  font-family: ${Fonts.Narrow};
  font-size: ${props => props.$compact ? 7 : 8}px;
  line-height: 10px;
  white-space: nowrap;
  overflow: hidden;
`

const Scrollbar = styled.div`
  display: flex;
  flex-direction: column;
  grid-column: 3;
  grid-row: 2 / 4;
  border-left: 2px solid #2f383e;
  background: #3a4349;
  color: #8f999e;
`

const ScrollButton = styled.button`
  ${Center};
  height: 13px;
  background: #535d62;
`

const ScrollThumb = styled.div`
  height: 23px;
  margin: 1px 0 auto;
  background: #5c666c;
`

const overviewLines = [
    [4, 28, 1, '#45b8c4', 1], [2, 22, 2, '#4b4590', 2], [34, 46, 2, '#4b4590', 2], [0, 4, 4, '#c25a58', 1],
    [10, 28, 4, '#5cb552', 2], [28, 46, 4, '#41794a', 2], [28, 52, 7, '#55d0b0', 1], [40, 50, 8, '#c25a58', 1],
    [52, 54, 8, '#c25a58', 2], [52, 54, 10, '#8f9a9a', 1], [28, 33, 11, '#6f9a9a', 1]
]

const editTools = [
    ['pencil'], ['brush', '#5ab4ee'], ['ban'], ['mute'], ['slip'], ['slice'], ['select'], ['zoom'], ['playback']
]

const clipIcon = kind => kind === 'audio' ? 'audio' : kind.startsWith('auto') ? 'auto' : 'pattern'

const Clip = ({ kind, name, start, end }) => {
    const [bg, color] = clipColors[kind]
    const [width, drawing] = previews[kind]
    return (
        <ClipBox $from={Math.round((start - 1) * BEATS) + 1} $to={Math.round((end - 1) * BEATS) + 1}>
            <ClipHeader $bg={bg} $color={color} $compact={name.length > 16}><Icon name={clipIcon(kind)} size={7}/>{name}</ClipHeader>
            <Preview viewBox={`0 0 ${width} 27`} preserveAspectRatio="none">{drawing}</Preview>
        </ClipBox>
    )
}

const bars = Array.from({ length: BARS }, (_, i) => i)

class Playlist extends Component {
    state = { muted: {} }

    toggle = track => {
        this.setState(({ muted }) => ({ muted: { ...muted, [track]: !muted[track] } }))
    }

    render () {
        return (
            <PlaylistWindow>
                <TitleBar>
                    <Icon name="right" size={8}/>
                    <EditTools>
                        <EditTool $color="#4fd08a" aria-label="Snap"><Icon name="magnet" size={10}/></EditTool>
                    </EditTools>
                    <EditTools>
                        {editTools.map(([name, color]) =>
                            <EditTool key={name} $color={color} aria-label={name}><Icon name={name} size={10}/></EditTool>
                        )}
                    </EditTools>
                    <Icon name="speaker" size={10}/>
                    <Title>
                        Playlist - Arrangement <Icon name="chevron" size={6}/> WindSFX_Reverse - Volume <Icon name="chevron" size={6}/>
                    </Title>
                    <WindowButtons $gap={1} $color="#e4e9eb">
                        {['min', 'restore', 'close'].map(name =>
                            <WindowButton key={name} aria-label={name}><Icon name={name} size={7}/></WindowButton>
                        )}
                    </WindowButtons>
                </TitleBar>
                <PlaylistBody>
                    <PickerPanel>
                        <PickerTabs>
                            <PickerTab $current aria-label="Patterns"><Icon name="keys" size={12}/></PickerTab>
                            <PickerTab aria-label="Audio"><Icon name="wave" size={12}/></PickerTab>
                            <PickerTab aria-label="Automation"><Icon name="curve" size={12}/></PickerTab>
                        </PickerTabs>
                        <PickerBody>
                            <PickerList>
                                {patterns.map(([name, bg, color]) =>
                                    <PickerItem key={name} $bg={bg} $selected={name === 'Cardinal2'}>
                                        <PickerLabel $color={color}><Icon name="pattern" size={7}/>{name}</PickerLabel>
                                    </PickerItem>
                                )}
                            </PickerList>
                            <PickerScroll/>
                        </PickerBody>
                        <AddPattern aria-label="Add pattern"><Icon name="plus" size={8}/></AddPattern>
                    </PickerPanel>
                    <Arrangement>
                        <TrackOptions>
                            <OptionIcons><Icon name="wave" size={11}/><Icon name="curve" size={11}/><Icon name="keys" size={10}/></OptionIcons>
                            <Switches>
                                <Switch>STEP<SwitchBox type="checkbox"/></Switch>
                                <Switch>SLIDE<SwitchBox type="checkbox"/></Switch>
                            </Switches>
                        </TrackOptions>
                        <Overview>
                            <OverviewButton aria-label="Scroll left"><Icon name="chevronLeft" size={9}/></OverviewButton>
                            <OverviewMap viewBox={`0 0 ${BARS} 13`} preserveAspectRatio="none">
                                {overviewLines.map(([from, to, y, color, height], i) =>
                                    <rect key={i} x={from} y={y} width={to - from} height={height} fill={color}/>
                                )}
                            </OverviewMap>
                            <OverviewButton aria-label="Scroll right"><Icon name="chevron" size={9}/></OverviewButton>
                        </Overview>
                        <Corner/>
                        <Ruler>
                            {bars.filter(bar => bar % 2 === 0).map(bar =>
                                bar === 0 ? <PlayHead key={bar}/> : <RulerMark key={bar} $strong={bar % 4 === 0}>{bar + 1}</RulerMark>
                            )}
                        </Ruler>
                        <Headers>
                            {tracks.map((clips, i) =>
                                <Header key={i} $used={clips.length > 0}>
                                    Track {i + 1}
                                    <Led aria-label={`Mute track ${i + 1}`} aria-pressed={!!this.state.muted[i]} onClick={() => this.toggle(i)}/>
                                </Header>
                            )}
                        </Headers>
                        <Lanes>
                            {tracks.map((clips, i) =>
                                <Lane key={i}>
                                    {bars.map(bar => <Bar key={bar} $index={bar} $light={bar % 8 < 4}/>)}
                                    {clips.map(item => <Clip key={item.start} {...item}/>)}
                                </Lane>
                            )}
                        </Lanes>
                        <Scrollbar>
                            <ScrollButton aria-label="Scroll up"><Icon name="chevronUp" size={8}/></ScrollButton>
                            <ScrollThumb/>
                            <ScrollButton aria-label="Scroll down"><Icon name="chevronDown" size={8}/></ScrollButton>
                        </Scrollbar>
                    </Arrangement>
                </PlaylistBody>
            </PlaylistWindow>
        )
    }
}

/* ---------- taskbar ---------- */

const TaskbarBox = styled.footer`
  display: grid;
  grid-template-columns: 1fr auto 1fr;
  align-items: center;
  flex: none;
  height: 32px;
  border-top: 1px solid #3a3a3a;
  background: #202020;
  color: #e9e9e9;
  font-family: ${Fonts.System};
  font-size: 8px;
  line-height: 10px;
`

const Weather = styled.button`
  display: flex;
  align-items: center;
  justify-self: start;
  gap: 5px;
  padding-left: 12px;
  text-align: left;
`

const Apps = styled.div`
  display: flex;
  align-items: center;
  gap: 9px;
`

const AppButton = styled.button`
  ${Center};
  position: relative;
  width: 20px;
  height: 30px;
  color: ${props => props.$color || 'inherit'};
  ${props => props.$running && css`
    &:after {
      content: '';
      position: absolute;
      bottom: 1px;
      width: 4px;
      height: 2px;
      border-radius: 1px;
      background: #9a9a9a;
    }
  `};
`

const Badge = styled.span`
  position: absolute;
  top: 4px;
  right: ${props => props.$round ? 0 : -2}px;
  width: ${props => props.$round ? 8 : 11}px;
  height: 8px;
  border-radius: ${props => props.$round ? 4 : 2}px;
  background: #e5484d;
  color: #fff;
  font-size: 6px;
  line-height: 8px;
`

const Search = styled.label`
  display: flex;
  align-items: center;
  gap: 6px;
  width: 146px;
  height: 22px;
  margin: 0 -2px;
  padding: 0 3px 0 8px;
  border-radius: 11px;
  background: #3b3b3b;
`

const SearchInput = styled.input`
  flex: 1;
  min-width: 0;
  font-size: 9px;
  &::placeholder { color: #d2d2d2; }
`

const Tray = styled.div`
  display: flex;
  align-items: center;
  justify-self: end;
  gap: 10px;
  padding-right: 13px;
`

const TrayText = styled.div`
  text-align: ${props => props.$right ? 'right' : 'center'};
  margin-left: ${props => props.$right ? 2 : 0}px;
`

const TrayPair = styled.div`
  display: flex;
  gap: 3px;
`

const appIcons = {
    windows: <g fill="#3db9f5"><path d="M0 0h7.500v7.500H0zM8.500 0H16v7.500H8.500zM0 8.500h7.500V16H0zM8.500 8.500H16V16H8.500z"/></g>,
    tasks: <g><rect x="0" y="5" width="11" height="9" fill="#77797c"/><rect x="4" y="1" width="12" height="10" fill="#f2f2f2"/></g>,
    copilot: <g><path d="M3 2h6l-3 12H3C0 14 0 10 1 7z" fill="#2aa5e8"/><path d="M5 1h5l2 4H6L4 9H1z" fill="#8bc94c"/><path d="M9 2h3c4 0 4 4 3 7l-2 4H7z" fill="#e55a9c"/><path d="M6 11h7l-3 4H6z" fill="#f39a3a"/><path d="M9 6L7 10" stroke="#202020" strokeWidth="1.500"/></g>,
    teams: <g><circle cx="9" cy="3" r="3" fill="#7b83eb"/><circle cx="14" cy="4" r="2" fill="#5059c9"/><path d="M5 7h11v5c-2 5-9 5-10 0z" fill="#5d65d2"/><rect x="0" y="4" width="9" height="9" rx="1" fill="#4b53bc"/><path d="M2 6.500h5M4.500 6.500v5" stroke="#fff" strokeWidth="1.300"/></g>,
    settings: <g><circle cx="8" cy="8" r="6.500" fill="none" stroke="#8796a5" strokeWidth="3" strokeDasharray="3.400 1.700"/><circle cx="8" cy="8" r="5.500" fill="#9fb0bf"/><circle cx="8" cy="8" r="3" fill="#2379cc" stroke="#f1f5f8" strokeWidth="1.200"/></g>,
    chrome: <g><circle cx="8" cy="8" r="8" fill="#34a853"/><path d="M8 8L1.100 4A8 8 0 0114.900 4z" fill="#ea4335"/><path d="M8 4h6.900A8 8 0 018 16l3.500-6z" fill="#fbbc05"/><circle cx="8" cy="8" r="4" fill="#fff"/><circle cx="8" cy="8" r="3" fill="#4285f4"/></g>,
    explorer: <g><path d="M0 2h6l2 2h8v11H0z" fill="#e2a52c"/><path d="M0 5h16v10H0z" fill="#fdd25a"/><path d="M3 10h10v5H3z" fill="#2878c0"/></g>,
    store: <g><path d="M5 3V1h6v2" fill="none" stroke="#3cb1e8" strokeWidth="1.500"/><rect x="0" y="3" width="16" height="13" rx="2" fill="#f2f4f6"/><path d="M5 6h3v3H5z" fill="#f25022"/><path d="M8.500 6h3v3h-3z" fill="#7fba00"/><path d="M5 9.500h3v3H5z" fill="#00a4ef"/><path d="M8.500 9.500h3v3h-3z" fill="#ffb900"/></g>,
    fl: <g><circle cx="8" cy="8" r="8" fill="#41464a"/><path d="M5 6c1-2 6-2 7 0 0 4-2 8-5 9-2-2-3-6-2-9z" fill="#f58a25"/><path d="M8 6L7 2l2 1 2-2 0 3 3 0-3 3z" fill="#74c045"/></g>,
    clip: <g><path d="M1 3l14-3v4L1 5z" fill="#a352ee"/><rect x="1" y="6" width="14" height="10" rx="1" fill="#7a3fe0"/><path d="M1 9h14v3H1z" fill="#a86cf5"/></g>,
    swirl: <g><rect width="16" height="16" rx="3" fill="#101416"/><path d="M13 3H7c-4 0-4 5 0 5h2c4 0 4 5 0 5H3M12 5H8c-1 0-1 1 0 1h2c5 1 5 8 0 9M4 11h4" fill="none" stroke="#4fa9c0" strokeWidth="1"/></g>,
    lime: <g><circle cx="8" cy="8" r="8" fill="#57b947"/><circle cx="7" cy="9" r="4" fill="none" stroke="#fff" strokeWidth="2.200"/><path d="M9 0h7v6l-4 1z" fill="#f4efe4"/><path d="M10 5l4-4M12 6l2-3" stroke="#e6702a" strokeWidth="1.200"/></g>,
    weather: <g><path d="M0 9C1 2 12 1 14 8l-7-1z" fill="#4aa3e8"/><path d="M8 7l1 6c0 3-3 3-3 1" fill="none" stroke="#c7c7c7" strokeWidth="1.300"/><path d="M8 1l1 1M12 0l1 1M15 3l1 1M13 4l1 1" stroke="#57b6f4" strokeWidth="1.500"/></g>
}

const BeachSvg = styled.svg`
  display: block;
  width: 32px;
  height: 17px;
`

const Beach = () => (
    <BeachSvg viewBox="0 0 32 17">
        <ellipse cx="16" cy="9" rx="16" ry="8" fill="#8dc5e6"/>
        <path d="M1 6c3-5 12-6 17-5l9 3 4 5-8 2H4z" fill="#f0e4d3"/>
        <path d="M4 9l6-3 4 2 4-4 9-1 3 7-6-1-4 1-5-2-4 2z" fill="#b2754f"/>
        <path d="M1 11l14-1 15 1c-2 4-9 6-15 6S3 15 1 11z" fill="#dfeef3"/>
        <path d="M6 13h12l-5 3z" fill="#3f9fc6"/>
    </BeachSvg>
)

const AppIcon = ({ name, size = 16 }) => <Svg viewBox="0 0 16 16" $size={size}>{appIcons[name]}</Svg>

const Disc = styled.span`
  ${Center};
  width: 15px;
  height: 15px;
  border-radius: 50%;
  background: ${props => props.$bg};
  color: ${props => props.$color};
`

const Taskbar = () => (
    <TaskbarBox>
        <Weather>
            <AppIcon name="weather"/>
            <span>Rainy days ahead<br/>8°C</span>
        </Weather>
        <Apps>
            <AppButton aria-label="Start"><AppIcon name="windows"/></AppButton>
            <Search>
                <Icon name="search" size={11}/>
                <SearchInput aria-label="Поиск" placeholder="Поиск"/>
                <Beach/>
            </Search>
            {['tasks', 'copilot', 'teams', 'settings'].map(name => <AppButton key={name} aria-label={name}><AppIcon name={name}/></AppButton>)}
            <AppButton $running aria-label="Chrome"><AppIcon name="chrome"/></AppButton>
            <AppButton $running aria-label="Explorer"><AppIcon name="explorer"/></AppButton>
            <AppButton aria-label="Store"><AppIcon name="store"/></AppButton>
            <AppButton $running aria-label="FL Studio"><AppIcon name="fl"/></AppButton>
            <AppButton aria-label="Clipchamp"><AppIcon name="clip"/></AppButton>
            <AppButton $running aria-label="Telegram"><Disc $bg="#fff" $color="#2aa1da"><FaTelegram size={15}/></Disc><Badge>03</Badge></AppButton>
            <AppButton $running $color="#1ed760" aria-label="Spotify"><FaSpotify size={16}/></AppButton>
            <AppButton $running aria-label="Discord"><Disc $bg="#5865f2" $color="#fff"><FaDiscord size={10}/></Disc><Badge $round/></AppButton>
            <AppButton aria-label="GitHub"><Disc $bg="#fff" $color="#7a2fa3"><FaGithub size={15}/></Disc></AppButton>
            <AppButton aria-label="Swirl"><AppIcon name="swirl" size={14}/></AppButton>
            <AppButton aria-label="Lime"><AppIcon name="lime"/></AppButton>
            <AppButton aria-label="Steam"><Disc $bg="#f1f5f8" $color="#174a78"><FaSteam size={15}/></Disc></AppButton>
            <AppButton $running aria-label="Steam client"><Disc $bg="#f1f5f8" $color="#174a78"><FaSteam size={15}/></Disc></AppButton>
        </Apps>
        <Tray>
            <Icon name="chevronUp" size={9}/>
            <Icon name="sync" size={13}/>
            <TrayText>ENG<br/>INTL</TrayText>
            <TrayPair><Icon name="wifi" size={11}/><Icon name="volume" size={11}/></TrayPair>
            <TrayText $right>2:03<br/>21.10.2025</TrayText>
        </Tray>
    </TaskbarBox>
)

const App = () => (
    <Screen>
        <GlobalStyle/>
        <MainToolbar/>
        <Workspace>
            <Browser/>
            <Playlist/>
        </Workspace>
        <Taskbar/>
    </Screen>
)

export default App
